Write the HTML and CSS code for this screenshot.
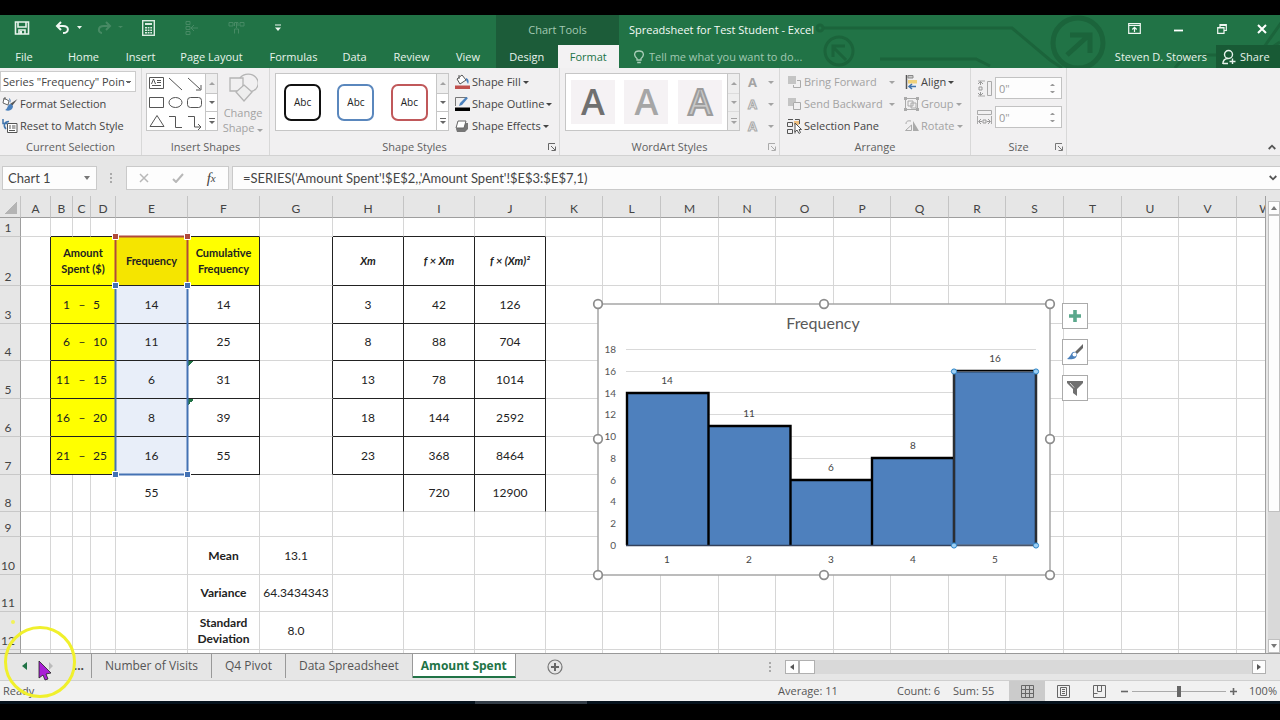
FILE: index.html
```html
<!DOCTYPE html>
<html lang="en">
<head>
<meta charset="utf-8">
<title>Spreadsheet for Test Student - Excel</title>
<link rel="stylesheet" href="styles.css">
</head>
<body>
<div class="app">
  <header class="titlebar">
    <svg class="circuit" width="470" height="53" viewBox="810 15 470 53" aria-hidden="true">
      <g fill="none" stroke="#1b643b" stroke-width="3">
        <path d="M822 28H1012L1050 60L1062 68M880 59H976L990 66M920 75L932 71H1016L1034 77M1175 68L1186 55H1260L1280 42M1262 50L1290 10"/>
        <circle cx="820" cy="28" r="3"/>
        <circle cx="839" cy="51" r="14"/>
        <path d="M846 60L833 47M833 57V46H845"/>
        <circle cx="1078" cy="43" r="25" stroke-width="5"/>
        <path d="M1067 55L1088 36M1070 35H1090V53" stroke-width="5"/>
      </g>
    </svg>
    <div class="tb-left">
      <div class="qat">
        <button class="ico q-save" aria-label="Save"><svg width="16" height="16" viewBox="0 0 16 16"><path d="M1.500 2H14.500V14H1.500ZM4 2V7H12V2M5 14V10H11V14" fill="none" stroke="#e8f3ec" stroke-width="1.600"/><path d="M6 11H8V14H6Z" fill="#e8f3ec"/></svg></button>
        <button class="ico q-undo" aria-label="Undo"><svg width="28" height="16" viewBox="0 0 28 16"><path d="M3 6H8C15 6 14 13 8 13M6 2L2 6L6 10" fill="none" stroke="#f0f7f2" stroke-width="2"/><path d="M22 6H27L24.500 9Z" fill="#f0f7f2"/></svg></button>
        <button class="ico q-redo" aria-label="Redo" disabled><svg width="28" height="16" viewBox="0 0 28 16"><path d="M13 6H8C1 6 2 13 6 13M10 2L14 6L10 10" fill="none" stroke="#478a64" stroke-width="2"/><path d="M22 6H27L24.500 8Z" fill="#478a64"/></svg></button>
        <button class="ico q-calc" aria-label="Calculator"><svg width="13" height="16" viewBox="0 0 13 16"><rect x=".7" y=".7" width="11.600" height="14.600" fill="none" stroke="#dcece2" stroke-width="1.400"/><path d="M3 3H10V5H3ZM3 7H5V8.500H3ZM5.700 7H7.500V8.500H5.700ZM8.300 7H10V8.500H8.300ZM3 9.500H5V11H3ZM5.700 9.500H7.500V11H5.700ZM8.300 9.500H10V11H8.300ZM3 12H5V13.500H3ZM5.700 12H7.500V13.500H5.700ZM8.300 12H10V13.500H8.300Z" fill="#dcece2"/></svg></button>
        <button class="ico q-prec" aria-label="Trace precedents" disabled><svg width="14" height="16" viewBox="0 0 14 16"><path d="M1 1.500H5V4.500H1ZM1 6.500H5V9.500H1ZM1 11.500H5V14.500H1ZM13 8H6M9 5L6 8L9 11" fill="none" stroke="#478a64"/></svg></button>
        <button class="ico q-dep" aria-label="Trace dependents" disabled><svg width="17" height="14" viewBox="0 0 17 14"><path d="M1 1.500H5V5H1ZM6.500 5V1.500H10V5M12 1.500H16V5H12ZM8.500 2V7M6.500 12.500V8H10.500V12.500" fill="none" stroke="#478a64"/></svg></button>
        <button class="ico q-more" aria-label="Customize toolbar"><svg width="6" height="8" viewBox="0 0 6 8"><path d="M0 1H6" stroke="#f0f7f2"/><path d="M0 3.500H6L3 7Z" fill="#f0f7f2"/></svg></button>
      </div>
      <nav class="tabs">
        <button class="tab">File</button><button class="tab">Home</button><button class="tab">Insert</button><button class="tab">Page Layout</button><button class="tab">Formulas</button><button class="tab">Data</button><button class="tab">Review</button><button class="tab">View</button>
      </nav>
    </div>
    <div class="tb-context">
      <div class="context-name">Chart Tools</div>
      <nav class="context-tabs"><button class="tab">Design</button><button class="tab tab-active">Format</button></nav>
    </div>
    <div class="tb-right">
      <div class="title-row">
        <h1 class="doc-title">Spreadsheet for Test Student - Excel</h1>
        <div class="window-buttons">
          <button class="ico" aria-label="Ribbon display options"><svg width="13" height="11" viewBox="0 0 13 11"><path d="M.7.700H12.300V10.300H.7ZM.7 2.500H12.300M6.500 9V4.500M4.300 6.500L6.500 4.300L8.700 6.500" fill="none" stroke="#f0f7f2" stroke-width="1.200"/></svg></button>
          <button class="ico" aria-label="Minimize"><svg width="10" height="11" viewBox="0 0 10 11"><path d="M1 7.500H10" stroke="#fff" stroke-width="1.800"/></svg></button>
          <button class="ico" aria-label="Restore"><svg width="10" height="10" viewBox="0 0 10 10"><path d="M.7 3.500H7V9.300H.7ZM3 3V.7H9.300V6.500H7M.7 4H7M3 1.300H9" fill="none" stroke="#f0f7f2" stroke-width="1.200"/></svg></button>
          <button class="ico" aria-label="Close"><svg width="10" height="10" viewBox="0 0 10 10"><path d="M1 1L9 9M9 1L1 9" stroke="#fff" stroke-width="2"/></svg></button>
        </div>
      </div>
      <div class="tell-row">
        <svg width="10" height="14" viewBox="0 0 10 14" aria-hidden="true"><path d="M3 10V8.500C-.5 6-.3 1 5 1S10.500 6 7 8.500V10ZM3.200 12.500H6.800" fill="none" stroke="#a9cdb8" stroke-width="1.300"/></svg>
        <input class="tell" aria-label="Tell me what you want to do" placeholder="Tell me what you want to do...">
        <span class="user">Steven D. Stowers</span>
        <button class="share"><svg width="14" height="16" viewBox="0 0 14 16" aria-hidden="true"><circle cx="6.500" cy="5.500" r="4" fill="none" stroke="#e8f3ec" stroke-width="1.400"/><path d="M.8 15C1 11 3 9.500 6 9.500M10.500 9.500V15M7.500 12.500H13.500M1 14.500H6" fill="none" stroke="#e8f3ec" stroke-width="1.400"/></svg>Share</button>
      </div>
    </div>
  </header>

  <section class="ribbon">
    <div class="group g-selection">
      <div class="group-body col">
        <select class="element-select" aria-label="Chart elements"><option>Series "Frequency" Point 5</option></select>
        <button class="cmd"><svg width="16" height="16" viewBox="0 0 16 16"><path d="M2 2L7 5L6 9L1 7ZM3 1V4" fill="#fff" stroke="#666"/><path d="M15.500 3L10 10L8 8Z" fill="#555"/><path d="M7 2C9 3 9 5 8 7Z" fill="#4b81bd"/><path d="M9 8C5 8 6 13 3 14C8 16 11 13 11 10Z" fill="#4b81bd"/></svg>Format Selection</button>
        <button class="cmd"><svg width="16" height="16" viewBox="0 0 16 16"><path d="M5.500 5.500H15V14.500H5.500ZM7 8H9M10 8H13.500M7 10H9M10 10H13.500M7 12.500H13" fill="#fff" stroke="#555"/><path d="M4 11C1 8 2 3.500 7 3.500M1 1V5.500H5.500" fill="none" stroke="#3f74ad" stroke-width="1.500"/></svg>Reset to Match Style</button>
      </div>
      <div class="group-foot"><span class="group-name">Current Selection</span></div>
    </div>
    <div class="group g-shapes">
      <div class="group-body row">
        <div class="gallery">
          <svg width="58" height="57" viewBox="147 74 58 57" fill="none" stroke="#555" stroke-width="1" aria-label="Shapes"><path d="M149.500 77.500H163.500V88.500H149.500ZM157 80.500H161M157 82.500H161M152 85.500H161M151.500 84L153.500 79L155.500 84M169 78L182 90M188 78L200 89M201 85V90H196M149.500 97.500H163.500V107.500H149.500ZM150 126.500H164L157 115.500ZM169 116.500H175.500V127.500H182M188 116.500H194.500V127H200M198 124L201 127L198 130"/><ellipse cx="175.500" cy="102.500" rx="6.500" ry="5"/><rect x="187.500" y="97.500" width="14" height="10" rx="3"/></svg>
          <div class="gallery-scroll"><button class="up off" aria-label="Previous row"></button><button class="down" aria-label="Next row"></button><button class="more" aria-label="More shapes"></button></div>
        </div>
        <button class="change-shape" disabled><svg width="30" height="30" viewBox="0 0 30 30" fill="none" stroke="#b4b4b4" stroke-width="1.300"><path d="M2 5H15V18H2Z"/><path d="M12 5A10 9 0 1 1 22 19" /><path d="M16 12L24 19L16 28L8 19Z" fill="#eee"/></svg><span>Change<br>Shape <i class="caret"></i></span></button>
      </div>
      <div class="group-foot"><span class="group-name">Insert Shapes</span></div>
    </div>
    <div class="group g-styles">
      <div class="group-body row">
        <div class="gallery gallery-styles">
          <div class="tiles"><button class="abc abc-black">Abc</button><button class="abc abc-blue">Abc</button><button class="abc abc-red">Abc</button></div>
          <div class="gallery-scroll"><button class="up off" aria-label="Previous row"></button><button class="down" aria-label="Next row"></button><button class="more" aria-label="More styles"></button></div>
        </div>
        <div class="col">
          <button class="cmd"><svg width="16" height="16" viewBox="0 0 16 16"><path d="M3 5L8 1L12 6L6 10Z" fill="#fff" stroke="#555"/><path d="M5 5V1" stroke="#555"/><path d="M12 4C15 5 15 8 14 10L12 6Z" fill="#4b81bd"/><path d="M1 11.500H16V15H1Z" fill="#c0504d"/></svg>Shape Fill<i class="caret"></i></button>
          <button class="cmd"><svg width="16" height="16" viewBox="0 0 16 16"><path d="M1.500 10V1.500H13" fill="none" stroke="#777"/><path d="M14 2L8 9L5 10L6 7L12 1Z" fill="#4b81bd"/><path d="M1 11.500H16V15H1Z" fill="#000"/></svg>Shape Outline<i class="caret"></i></button>
          <button class="cmd"><svg width="16" height="16" viewBox="0 0 16 16"><path d="M5 5H14V11L11 14H3L2 11Z" fill="#777"/><path d="M4 3H12L10 10H2Z" fill="#fff" stroke="#666" stroke-linejoin="round"/></svg>Shape Effects<i class="caret"></i></button>
        </div>
      </div>
      <div class="group-foot"><span class="group-name">Shape Styles</span><button class="launcher" aria-label="Format shape"><svg width="8" height="8" viewBox="0 0 8 8"><path d="M.5 7V.5H7M3 3L7 7M7.500 3.500V7.500H3.500" fill="none" stroke="#666"/></svg></button></div>
    </div>
    <div class="group g-wordart">
      <div class="group-body row">
        <div class="gallery gallery-wordart">
          <div class="tiles"><button class="wa wa-dark" disabled>A</button><button class="wa wa-light" disabled>A</button><button class="wa wa-outline" disabled>A</button></div>
          <div class="gallery-scroll"><button class="up off" aria-label="Previous row"></button><button class="down off" aria-label="Next row"></button><button class="more off" aria-label="More WordArt"></button></div>
        </div>
        <div class="col">
          <button class="cmd fx" disabled><b>A</b><i class="caret"></i></button>
          <button class="cmd fx" disabled><b class="fx-line">A</b><i class="caret"></i></button>
          <button class="cmd fx" disabled><b class="fx-glow">A</b><i class="caret"></i></button>
        </div>
      </div>
      <div class="group-foot"><span class="group-name">WordArt Styles</span><button class="launcher off" aria-label="Text effects"><svg width="8" height="8" viewBox="0 0 8 8"><path d="M.5 7V.5H7M3 3L7 7M7.500 3.500V7.500H3.500" fill="none" stroke="#aaa"/></svg></button></div>
    </div>
    <div class="group g-arrange">
      <div class="group-body row">
        <div class="col arrange-left">
          <button class="cmd split" disabled><svg width="15" height="16" viewBox="0 0 15 16"><path d="M1 2H9V10H1Z" fill="#c4c4c4"/><path d="M10 6.500H13.500V13.500H6.500V11" fill="none" stroke="#aaa"/></svg><span>Bring Forward</span><i class="caret"></i></button>
          <button class="cmd split" disabled><svg width="15" height="16" viewBox="0 0 15 16"><path d="M1 2H9V6H6V10H1Z" fill="#c4c4c4"/><path d="M6.500 6.500H13.500V13.500H6.500Z" fill="none" stroke="#aaa"/></svg><span>Send Backward</span><i class="caret"></i></button>
          <button class="cmd"><svg width="15" height="16" viewBox="0 0 15 16"><path d="M1 1.500H6M.5 4.500H5.500V8.500H.5ZM.5 11.500H5.500V15.500H.5ZM8 1.500H12.500V6M8 12V15.500" fill="none" stroke="#555"/><path d="M7 3H12V7H7Z" fill="#f0c080"/><path d="M8 5V14L10 12L12 15.500L13.500 14.500L12 11.500H14.500Z" fill="#fff" stroke="#555"/></svg>Selection Pane</button>
        </div>
        <div class="col">
          <button class="cmd"><svg width="15" height="16" viewBox="0 0 15 16"><path d="M2.500 1V15" stroke="#555" stroke-width="1.500"/><path d="M4 1.500H9V4H4Z" fill="#ccc" stroke="#888"/><path d="M4 6H13V9.500H4Z" fill="#f1d27a"/><path d="M12 12.500H5M8 10L5 12.500L8 15" fill="none" stroke="#3f74ad" stroke-width="1.500"/></svg>Align<i class="caret"></i></button>
          <button class="cmd" disabled><svg width="15" height="16" viewBox="0 0 15 16"><path d="M1.500 2.500H13.500V13.500H1.500ZM4 5H9V10H4ZM7 7H12V12H7Z" fill="none" stroke="#aaa"/><path d="M0 1H3V4H0ZM12 1H15V4H12ZM0 12H3V15H0ZM12 12H15V15H12Z" fill="#aaa"/></svg>Group<i class="caret"></i></button>
          <button class="cmd" disabled><svg width="15" height="16" viewBox="0 0 15 16"><path d="M9 3V13H15Z" fill="#aaa"/><path d="M7.500 7V12.500H1.500ZM2 6C2 3 4 2.500 7 3" fill="none" stroke="#aaa"/></svg>Rotate<i class="caret"></i></button>
        </div>
      </div>
      <div class="group-foot"><span class="group-name">Arrange</span></div>
    </div>
    <div class="group g-size">
      <div class="group-body col size-fields">
        <label class="size-field"><svg width="15" height="17" viewBox="0 0 15 17"><path d="M10.500 1.500H14.500V15.500H10.500ZM1 1H8M1 16H8" fill="none" stroke="#aaa"/><path d="M3.500 2V5M3.500 12V15M1 4L3.500 1.500L6 4M1 13L3.500 15.500L6 13M2 7H5V10H2Z" fill="none" stroke="#999"/></svg><input value='0"' aria-label="Shape height" disabled><span class="spin"></span></label>
        <label class="size-field"><svg width="15" height="17" viewBox="0 0 15 17"><path d="M.5 1.500H14.500V5.500H.5ZM.5 7V15M14.500 7V15" fill="none" stroke="#aaa"/><path d="M4 10L1.500 12.500L4 15M11 10L13.500 12.500L11 15M2 12.500H5M10 12.500H13M6 11H9V14H6Z" fill="none" stroke="#999"/></svg><input value='0"' aria-label="Shape width" disabled><span class="spin"></span></label>
      </div>
      <div class="group-foot"><span class="group-name">Size</span><button class="launcher" aria-label="Size and properties"><svg width="8" height="8" viewBox="0 0 8 8"><path d="M.5 7V.5H7M3 3L7 7M7.500 3.500V7.500H3.500" fill="none" stroke="#777"/></svg></button></div>
    </div>
    <button class="collapse" aria-label="Collapse ribbon"><svg width="8" height="6" viewBox="0 0 8 6"><path d="M.7 5L4 1.700L7.300 5" fill="none" stroke="#555" stroke-width="1.800"/></svg></button>
  </section>

  <section class="formula-bar">
    <div class="name-box"><input value="Chart 1" aria-label="Name box"><button class="drop" aria-label="Names"></button></div>
    <span class="grip"></span>
    <div class="formula-buttons">
      <button class="ico" aria-label="Cancel"><svg width="10" height="10" viewBox="0 0 10 10"><path d="M1 1L9 9M9 1L1 9" stroke="#b8b8b8" stroke-width="1.500"/></svg></button>
      <button class="ico" aria-label="Enter"><svg width="12" height="10" viewBox="0 0 12 10"><path d="M1 6L4 9L11 1" fill="none" stroke="#b8b8b8" stroke-width="2"/></svg></button>
      <button class="ico fx-button" aria-label="Insert function">f<small>x</small></button>
    </div>
    <div class="formula"><input value="=SERIES('Amount Spent'!$E$2,,'Amount Spent'!$E$3:$E$7,1)" aria-label="Formula"><button class="ico" aria-label="Expand formula bar"><svg width="8" height="6" viewBox="0 0 8 6"><path d="M.7 1L4 4.300L7.300 1" fill="none" stroke="#555" stroke-width="1.800"/></svg></button></div>
  </section>

  <main class="workspace">
    <div class="sheet">
      <table class="grid" id="grid"></table>
      <svg class="ranges" width="80" height="246" viewBox="111 232 80 246" aria-hidden="true">
        <path d="M115.500 284V236.500H187.500V284" fill="none" stroke="#b04a3c" stroke-width="2"/>
        <path d="M115.500 287V474.500H187.500V287" fill="none" stroke="#4472b4" stroke-width="2"/>
        <g stroke="#fff" stroke-width="1"><path d="M112.500 233.500H118.500V239.500H112.500ZM184.500 233.500H190.500V239.500H184.500Z" fill="#b04a3c"/><path d="M112.500 282.500H118.500V288.500H112.500ZM184.500 282.500H190.500V288.500H184.500ZM112.500 471.500H118.500V477.500H112.500ZM184.500 471.500H190.500V477.500H184.500Z" fill="#4472b4"/></g>
      </svg>
      <svg class="chart" width="464" height="283" viewBox="592 298 464 283" role="img" aria-label="Frequency chart">
        <rect x="598" y="304" width="452" height="271" fill="#fff" stroke="#a6a6a6" stroke-width="1.500"/>
        <path d="M626 349.500H1036M626 371.500H1036M626 392.500H1036M626 414.500H1036M626 436.500H1036M626 458.500H1036M626 480.500H1036M626 501.500H1036M626 523.500H1036" stroke="#d9d9d9"/>
        <text class="chart-title" x="823" y="329">Frequency</text>
        <g class="axis-y"><text x="616" y="353">18</text><text x="616" y="375">16</text><text x="616" y="397">14</text><text x="616" y="418">12</text><text x="616" y="440">10</text><text x="616" y="462">8</text><text x="616" y="484">6</text><text x="616" y="505">4</text><text x="616" y="527">2</text><text x="616" y="549">0</text></g>
        <g fill="#4e80bd"><path d="M627 393H709V545H627ZM709 426H791V545H709ZM791 480H872V545H791ZM872 458H954V545H872ZM954 371H1036V545H954Z"/></g>
        <path d="M627 545V393H708.500V545M708.500 426H790.500V545M790.500 480H872M872 545V458H954M954 545V371H1036V545" fill="none" stroke="#000" stroke-width="2.400"/>
        <path d="M626 545.500H1036" stroke="#33415c" stroke-width="1.400"/>
        <path d="M954 545V371.500H1036V545Z" fill="none" stroke="#6c7480" stroke-width=".8"/>
        <g class="chart-labels"><text x="667" y="384">14</text><text x="749" y="417">11</text><text x="831" y="471">6</text><text x="913" y="449">8</text><text x="995" y="362">16</text><text x="667" y="563">1</text><text x="749" y="563">2</text><text x="831" y="563">3</text><text x="913" y="563">4</text><text x="995" y="563">5</text></g>
        <g fill="#9fd0f5" stroke="#2e86c9"><circle cx="954" cy="371.500" r="2.600"/><circle cx="1036" cy="371.500" r="2.600"/><circle cx="954" cy="545.500" r="2.600"/><circle cx="1036" cy="545.500" r="2.600"/></g>
        <g fill="#fff" stroke="#8c8c8c" stroke-width="1.700"><circle cx="598" cy="304" r="4.300"/><circle cx="824" cy="304" r="4.300"/><circle cx="1050" cy="304" r="4.300"/><circle cx="598" cy="439" r="4.300"/><circle cx="1050" cy="439" r="4.300"/><circle cx="598" cy="575" r="4.300"/><circle cx="824" cy="575" r="4.300"/><circle cx="1050" cy="575" r="4.300"/></g>
      </svg>
      <div class="chart-buttons">
        <button aria-label="Chart elements"><svg width="18" height="18" viewBox="0 0 18 18"><path d="M9 3V15M3 9H15" stroke="#5ba88c" stroke-width="3.600"/></svg></button>
        <button aria-label="Chart styles"><svg width="18" height="18" viewBox="0 0 18 18"><path d="M17 1V5L11 11L9 9Z" fill="#666"/><path d="M9 9C5 8 6 13 1 16C6 17 11 16 11 11Z" fill="#4b81bd"/><circle cx="8.500" cy="11.500" r="2" fill="#fff"/></svg></button>
        <button aria-label="Chart filters"><svg width="18" height="18" viewBox="0 0 18 18"><path d="M1 2H17V4L11 10V17L7 14V10L1 4Z" fill="#707070"/><path d="M4 4L8 8.500" stroke="#ddd"/></svg></button>
      </div>
    </div>
    <div class="vscroll"><button class="v-up" aria-label="Scroll up"></button><div class="v-track"><div class="v-thumb"></div></div><button class="v-down" aria-label="Scroll down"></button></div>
  </main>

  <section class="sheet-bar">
    <div class="sheet-nav"><button class="nav-prev" aria-label="Previous sheets"></button><button class="nav-next" aria-label="Next sheets" disabled></button><button class="nav-more">...</button></div>
    <button class="sheet-tab">Number of Visits</button>
    <button class="sheet-tab">Q4 Pivot</button>
    <button class="sheet-tab">Data Spreadsheet</button>
    <button class="sheet-tab sheet-active">Amount Spent</button>
    <button class="ico add-sheet" aria-label="New sheet"><svg width="16" height="16" viewBox="0 0 16 16"><circle cx="8" cy="8" r="7" fill="none" stroke="#777" stroke-width="1.200"/><path d="M8 4V12M4 8H12" stroke="#666" stroke-width="2"/></svg></button>
    <span class="grip tab-grip"></span>
    <div class="hscroll"><button class="h-left" aria-label="Scroll left"></button><div class="h-track"><div class="h-thumb"></div></div><button class="h-right" aria-label="Scroll right"></button></div>
  </section>

  <footer class="status">
    <span class="ready">Ready</span>
    <span class="stat stat-avg">Average: 11</span><span class="stat stat-count">Count: 6</span><span class="stat stat-sum">Sum: 55</span>
    <button class="view view-on" aria-label="Normal view"><svg width="13" height="13" viewBox="0 0 13 13"><path d="M.5.500H12.500V12.500H.5ZM4.500.500V12.500M8.500.500V12.500M.5 4.500H12.500M.5 8.500H12.500" fill="none" stroke="#666"/></svg></button>
    <button class="view" aria-label="Page layout view"><svg width="13" height="13" viewBox="0 0 13 13"><path d="M.5.500H12.500V12.500H.5ZM3.500 2.500H9.500V10.500H3.500ZM5 4.500H8M5 6.500H8M5 8.500H8" fill="none" stroke="#666"/></svg></button>
    <button class="view" aria-label="Page break view"><svg width="13" height="13" viewBox="0 0 13 13"><path d="M.5.500H12.500V12.500H.5ZM4.500.500V6.500H8.500V.5M.5 8.500H4.500" fill="none" stroke="#666"/></svg></button>
    <button class="zoom-step" aria-label="Zoom out"><svg width="7" height="7" viewBox="0 0 7 7"><path d="M0 3.500H7" stroke="#666" stroke-width="1.600"/></svg></button>
    <input class="zoom" type="range" min="0" max="100" value="50" aria-label="Zoom">
    <button class="zoom-step" aria-label="Zoom in"><svg width="7" height="7" viewBox="0 0 7 7"><path d="M0 3.500H7M3.500 0V7" stroke="#666" stroke-width="1.600"/></svg></button>
    <span class="zoom-value">100%</span>
  </footer>
  <div class="taskbar-edge"><span></span></div>
  <svg class="pointer" width="76" height="90" viewBox="0 615 76 90" aria-hidden="true"><circle cx="40" cy="662" r="34.500" fill="none" stroke="#f0f02c" stroke-width="3"/><circle cx="13" cy="622" r="2" fill="#f2f25a"/><path d="M39 661V678L43 675L45 680L48 679L46 674L51 673Z" fill="#a91fd6" stroke="#222" stroke-width=".8"/></svg>
</div>
<script src="app.js"></script>
</body>
</html>
```

FILE: styles.css
```css
* { box-sizing: border-box; }
html, body { height: 100%; }
body { margin: 0; background: #000; color: #444; font-family: "Open Sans", "Noto Sans", sans-serif; font-size: 11px; line-height: 16px; overflow: hidden; }
button, input, select { font: inherit; color: inherit; border: 0; background: none; padding: 0; margin: 0; min-width: 0; }
button { white-space: nowrap; }
svg { flex: none; display: block; }
.app { position: relative; display: flex; flex-direction: column; height: 100vh; padding: 15px 0 19px; }
.ico { display: flex; align-items: center; justify-content: center; }

/* title bar */
.titlebar { position: relative; display: grid; grid-template-columns: 496px 123px 1fr; height: 53px; flex: none; background: #217346; color: #e8f3ec; }
.circuit { position: absolute; right: 0; top: 0; }
.tb-left, .tb-context, .tb-right { position: relative; display: flex; flex-direction: column; }
.qat { display: flex; align-items: center; height: 30px; padding: 0 0 4px 14px; }
.q-undo { margin-left: 25px; }
.q-redo { margin-left: 13px; }
.q-calc { margin-left: 18px; }
.q-prec { margin-left: 30px; }
.q-dep { margin-left: 29px; }
.q-more { margin-left: 30px; }
.tabs { display: grid; grid-template-columns: 48px 71px 43px 99px 65px 57px 57px 56px; height: 23px; }
.tab { text-align: center; height: 23px; }
.tb-context { background: #1c5c39; }
.context-name { height: 30px; line-height: 30px; text-align: center; color: #a4c9b3; }
.context-tabs { display: grid; grid-template-columns: 1fr 1fr; }
.tab-active { background: #f3f2f3; color: #217346; }
.title-row { display: flex; align-items: center; justify-content: space-between; height: 30px; padding-left: 10px; }
.doc-title { margin: 0; font-size: 11px; font-weight: 400; color: #f4faf6; }
.window-buttons { display: flex; padding-bottom: 3px; }
.window-buttons .ico { width: 44px; height: 27px; }
.window-buttons .ico:last-child { width: 36px; }
.tell-row { display: flex; align-items: center; height: 23px; padding-left: 15px; }
.tell { flex: 1; margin-left: 5px; color: #fff; }
.tell::placeholder { color: #a2c8b2; opacity: 1; }
.user { margin-right: 9px; }
.share { display: flex; align-items: center; gap: 4px; width: 64px; height: 23px; padding-left: 6px; background: #185a35; }

/* ribbon */
.ribbon { display: flex; flex: none; height: 88px; background: #f1f0f1; border-bottom: 1px solid #d2d2d2; }
.group { display: flex; flex-direction: column; flex: none; padding: 3px 0 0; border-right: 1px solid #d8d8d8; }
.group-body { flex: 1; display: flex; }
.col { display: flex; flex-direction: column; }
.group-foot { position: relative; height: 16px; text-align: center; color: #5f5f5f; }
.launcher { position: absolute; right: 3px; top: 4px; }
.g-selection { width: 142px; }
.g-shapes { width: 128px; }
.g-styles { width: 290px; }
.g-wordart { width: 220px; }
.g-arrange { width: 191px; }
.g-size { width: 96px; }
.cmd { display: flex; align-items: center; gap: 2px; height: 22px; }
.cmd:disabled, .change-shape:disabled { color: #a3a3a3; }
.caret { display: inline-block; border: 3px solid transparent; border-top-color: currentColor; border-bottom: 0; }
.g-selection .cmd { padding-left: 2px; }
.element-select { appearance: none; width: 136px; height: 21px; margin-bottom: 1px; padding: 0 10px 0 2px; border: 1px solid #ccc; background: linear-gradient(#666, #666) no-repeat right 4px center / 5px 1px, linear-gradient(#666, #666) no-repeat right 5px top 10px / 3px 1px, #fff; }
.gallery { display: flex; height: 58px; margin-top: 2px; border: 1px solid #c6c6c6; background: #fff; }
.g-shapes .gallery { margin-left: 4px; }
.gallery-scroll { display: grid; grid-template-rows: 1fr 1fr 1fr; width: 12px; border-left: 1px solid #c6c6c6; }
.gallery-scroll button { display: grid; place-content: center; }
.gallery-scroll button + button { border-top: 1px solid #c6c6c6; }
.gallery-scroll button::after { content: ""; border: 3px solid transparent; border-top-color: #666; border-bottom: 0; }
.gallery-scroll .up::after { border-top: 0; border-bottom: 3px solid #666; }
.gallery-scroll .more::before { content: ""; height: 1px; margin-bottom: 2px; background: #666; }
.gallery-scroll .off { background: #e4e4e4; opacity: .6; }
.change-shape { display: flex; flex-direction: column; align-items: center; width: 50px; line-height: 15px; padding-top: 2px; gap: 2px; }
.gallery-styles { width: 174px; margin: 2px 5px 0 5px; }
.tiles { flex: 1; display: flex; align-items: center; justify-content: space-around; }
.abc { width: 37px; height: 37px; border: 2px solid; border-radius: 7px; font-size: 10px; color: #222; }
.abc-black { border-color: #111; }
.abc-blue { border-color: #5a87bd; }
.abc-red { border-color: #c0585a; }
.gallery-wordart { width: 175px; margin: 2px 8px 0 5px; }
.wa { width: 44px; height: 44px; background: #f5f2f4; font-size: 36px; font-weight: 600; }
.wa-dark { color: #707070; }
.wa-light { color: #a6a6a6; }
.wa-outline { color: #c8c8c8; -webkit-text-stroke: 2px #9c9c9c; }
.fx { width: 26px; justify-content: space-between; font-size: 13px; }
.fx-line, .fx-glow { color: #f1f0f1; -webkit-text-stroke: 1px #aaa; }
.arrange-left { width: 124px; padding-left: 7px; }
.split { width: 108px; }
.split .caret { margin-left: auto; }
.size-fields { padding: 6px 0 0 6px; gap: 7px; }
.size-field { display: flex; align-items: center; gap: 3px; }
.size-field input { width: 67px; height: 22px; border: 1px solid #c2c2c2; background: #fdfdfd; padding-left: 3px; color: #999; }
.spin { display: grid; gap: 5px; width: 5px; margin-left: -15px; }
.spin::before, .spin::after { content: ""; border: 2px solid transparent; border-bottom-color: #999; border-top: 0; }
.spin::after { border-top: 2px solid #999; border-bottom: 0; }
.collapse { margin: auto 4px 5px auto; }

/* formula bar */
.formula-bar { display: flex; align-items: center; flex: none; height: 40px; padding: 4px 0 0 2px; background: #e6e6e6; font-family: Lato, "Open Sans", sans-serif; font-size: 13px; }
.name-box, .formula-buttons, .formula { display: flex; align-items: center; height: 24px; border: 1px solid #cacaca; background: #fdfdfd; }
.name-box { width: 95px; }
.name-box input { flex: 1; padding-left: 5px; }
.drop { width: 18px; height: 22px; display: grid; place-content: center; }
.drop::after { content: ""; border: 3px solid transparent; border-top: 4px solid #777; border-bottom: 0; }
.grip { width: 2px; height: 11px; background: repeating-linear-gradient(#aaa 0 2px, transparent 2px 4px); }
.name-box + .grip { margin: 0 14px 0 13px; }
.formula-buttons { width: 103px; }
.formula-buttons .ico { flex: 1; }
.fx-button { font-family: "Liberation Serif", serif; font-style: italic; font-size: 15px; }
.fx-button small { font-size: 11px; }
.formula { flex: 1; margin-left: 3px; border-right: 0; }
.formula input { flex: 1; padding-left: 10px; }
.formula .ico { width: 15px; }

/* sheet */
.workspace { display: flex; flex: 1; min-height: 0; background: #e6e6e6; border-bottom: 1px solid #999; }
.sheet { position: relative; flex: 1; min-width: 0; overflow: hidden; background: #fff; border-right: 1px solid #a0a0a0; }
.grid { width: 1294px; table-layout: fixed; border-collapse: separate; border-spacing: 0; font-family: Lato, "Open Sans", sans-serif; font-size: 12px; line-height: 16px; color: #222; }
.grid th, .grid td { padding: 0; overflow: hidden; text-align: center; vertical-align: middle; border-right: 1px solid #d6d6d6; border-bottom: 1px solid #d6d6d6; }
.grid th { background: #e6e6e6; color: #444; font-weight: 400; }
.grid thead th { border-bottom-color: #9e9e9e; border-right-color: #c4c4c4; vertical-align: bottom; }
.grid tbody th { border-right-color: #9e9e9e; border-bottom-color: #c8c8c8; vertical-align: bottom; padding-right: 4px; white-space: nowrap; }
.grid thead th:first-child { background: linear-gradient(135deg, #e6e6e6 50%, #b4b4b4 50%) no-repeat right 3px bottom 3px / 12px 12px, #e6e6e6; }
.grid td.yellow { background: #ff0; }
.grid td.gold { background: #f5e500; }
.grid td.tint { background: #e8eef9; }
.grid td.bold { font-weight: 700; font-size: 11px; }
.grid td.label { font-weight: 700; }
.grid td.math { font-style: italic; }
.grid td.kr { border-right-color: #222; }
.grid td.kb { border-bottom-color: #222; }
.grid td.nr { border-right: 0; }
.grid td.right { text-align: right; padding-right: 3px; }
.grid td.left { text-align: left; padding-left: 2px; }
.grid td.flag { background: linear-gradient(135deg, #217346 50%, transparent 50%) no-repeat 0 0 / 6px 6px; }
.ranges { position: absolute; left: 111px; top: 36px; }
.chart { position: absolute; left: 592px; top: 102px; font-family: Lato, "Open Sans", sans-serif; }
.chart-title { font-size: 16px; fill: #595959; text-anchor: middle; }
.axis-y { font-size: 10px; fill: #555; text-anchor: end; }
.chart-labels { font-size: 10px; fill: #444; text-anchor: middle; }
.chart-buttons { position: absolute; left: 1062px; top: 107px; display: grid; gap: 10px; }
.chart-buttons button { display: grid; place-content: center; width: 26px; height: 26px; border: 1px solid #ababab; background: #fff; }
.vscroll { display: flex; flex-direction: column; width: 14px; padding: 5px 0 0 2px; }
.v-up, .v-down { display: grid; place-content: center; height: 14px; background: #fdfdfd; border: 1px solid #c0c0c0; }
.v-up::after, .v-down::after { content: ""; border: 3px solid transparent; border-bottom: 4px solid #777; border-top: 0; }
.v-down::after { border-top: 4px solid #777; border-bottom: 0; }
.v-track { flex: 1; background: #d9d9d9; }
.v-thumb { height: 70%; background: #fdfdfd; border: 1px solid #c0c0c0; }

/* sheet tabs */
.sheet-bar { display: flex; flex: none; height: 27px; background: #e6e6e6; border-bottom: 1px solid #cfcfcf; font-size: 12px; }
.sheet-nav { display: flex; align-items: center; width: 92px; height: 24px; padding-left: 21px; border-right: 1px solid #999; }
.nav-prev, .nav-next { width: 6px; height: 8px; border: 4px solid transparent; border-left: 0; border-right: 5px solid #217346; }
.nav-next { margin-left: 22px; border-left: 4px solid #bbb; border-right: 0; }
.nav-more { margin-left: auto; padding-right: 7px; font-weight: 700; }
.sheet-tab { height: 24px; padding: 0 13px; border-right: 1px solid #999; color: #555; }
.sheet-active { background: #fff; color: #217346; font-weight: 700; padding: 2px 8px 0; border-bottom: 2px solid #217346; }
.add-sheet { margin-left: 31px; height: 25px; }
.tab-grip { align-self: center; margin: 0 14px 0 auto; }
.hscroll { display: flex; align-items: center; width: 481px; margin-right: 14px; }
.h-left, .h-right { display: grid; place-content: center; width: 14px; height: 14px; background: #fdfdfd; border: 1px solid #b0b0b0; }
.h-left::after, .h-right::after { content: ""; border: 3px solid transparent; border-right: 4px solid #555; border-left: 0; }
.h-right::after { border-left: 4px solid #555; border-right: 0; }
.h-track { flex: 1; background: #d9d9d9; }
.h-thumb { width: 16px; height: 14px; background: #fff; border: 1px solid #b0b0b0; }

/* status bar */
.status { display: flex; align-items: center; flex: none; height: 20px; padding: 0 3px; background: #f1f1f1; color: #555; white-space: nowrap; }
.ready { flex: 1; }
.stat-avg { width: 119px; }
.stat-count { width: 56px; }
.stat-sum { width: 56px; }
.view { display: grid; place-content: center; width: 36px; height: 20px; }
.view-on { background: #cbcbcb; }
.zoom-step { display: grid; place-content: center; width: 9px; }
.view + .zoom-step { margin-left: 3px; }
.zoom { appearance: none; width: 94px; height: 12px; margin: 0 3px; background: linear-gradient(#aaa, #aaa) no-repeat center / 100% 1px; }
.zoom::-webkit-slider-thumb { appearance: none; width: 4px; height: 11px; background: #666; }
.zoom-value { margin-left: 11px; }
.taskbar-edge { height: 3px; flex: none; background: #06121c; margin-bottom: -3px; }
.taskbar-edge span { display: block; width: 112px; height: 3px; margin-left: 475px; background: #323c46; }
.pointer { position: absolute; left: 0; bottom: 15px; }
```

FILE: app.js
```js
const columns = [["A", 30], ["B", 22], ["C", 18], ["D", 25], ["E", 72], ["F", 72], ["G", 73], ["H", 71], ["I", 71], ["J", 71], ["K", 57], ["L", 58], ["M", 58], ["N", 57], ["O", 58], ["P", 57], ["Q", 58], ["R", 57], ["S", 58], ["T", 58], ["U", 57], ["V", 58], ["W", 58]];
const rowHeights = [19, 49, 38, 37, 38, 38, 38, 37, 25, 38, 37, 38, 25];

const cells = {
  B2: ["Amount<br>Spent ($)", "yellow bold kb"],
  E2: ["Frequency", "gold bold kb"],
  F2: ["Cumulative<br>Frequency", "yellow bold kb kr"],
  G2: ["", "kr"],
  H2: ["Xm", "bold math kb kr"],
  I2: ["f × Xm", "bold math kb kr"],
  J2: ["f × (Xm)²", "bold math kb kr"],
  A2: ["", "kr"],
  E8: [55, ""], H8: ["", "kr"], I8: [720, "kr"], J8: [12900, "kr"],
  F10: ["Mean", "label"], G10: ["13.1", ""],
  F11: ["Variance", "label"], G11: ["64.3434343", ""],
  F12: ["Standard<br>Deviation", "label"], G12: ["8.0", ""]
};
for (const c of "BCDEFHIJ") cells[c + 1] = ["", "kb"];

const data = [
  [1, 5, 14, 14, 3, 42, 126],
  [6, 10, 11, 25, 8, 88, 704],
  [11, 15, 6, 31, 13, 78, 1014],
  [16, 20, 8, 39, 18, 144, 2592],
  [21, 25, 16, 55, 23, 368, 8464]
];
data.forEach(([low, high, freq, cum, xm, fx, fx2], i) => {
  const r = i + 3;
  cells["A" + r] = ["", "kr"];
  cells["B" + r] = [low, "yellow right nr kb"];
  cells["C" + r] = ["–", "yellow nr kb"];
  cells["D" + r] = [high, "yellow left kb"];
  cells["E" + r] = [freq, "tint kb"];
  cells["F" + r] = [cum, "kb kr" + (r === 5 || r === 6 ? " flag" : "")];
  cells["G" + r] = ["", "kr"];
  cells["H" + r] = [xm, "kb kr"];
  cells["I" + r] = [fx, "kb kr"];
  cells["J" + r] = [fx2, "kb kr"];
});

let html = '<colgroup><col style="width:21px">' +
  columns.map(([, w]) => `<col style="width:${w}px">`).join("") +
  '</colgroup><thead><tr style="height:22px"><th></th>' +
  columns.map(([name]) => `<th>${name}</th>`).join("") + "</tr></thead><tbody>";

rowHeights.forEach((height, i) => {
  const r = i + 1;
  html += `<tr style="height:${height}px"><th>${r < 13 ? r : ""}</th>`;
  for (const [name] of columns) {
    if (r === 2 && (name === "C" || name === "D")) continue;
    const [text, cls] = cells[name + r] || ["", ""];
    html += `<td class="${cls}"${name + r === "B2" ? ' colspan="3"' : ""}>${text}</td>`;
  }
  html += "</tr>";
});
document.getElementById("grid").innerHTML = html + "</tbody>";
```
